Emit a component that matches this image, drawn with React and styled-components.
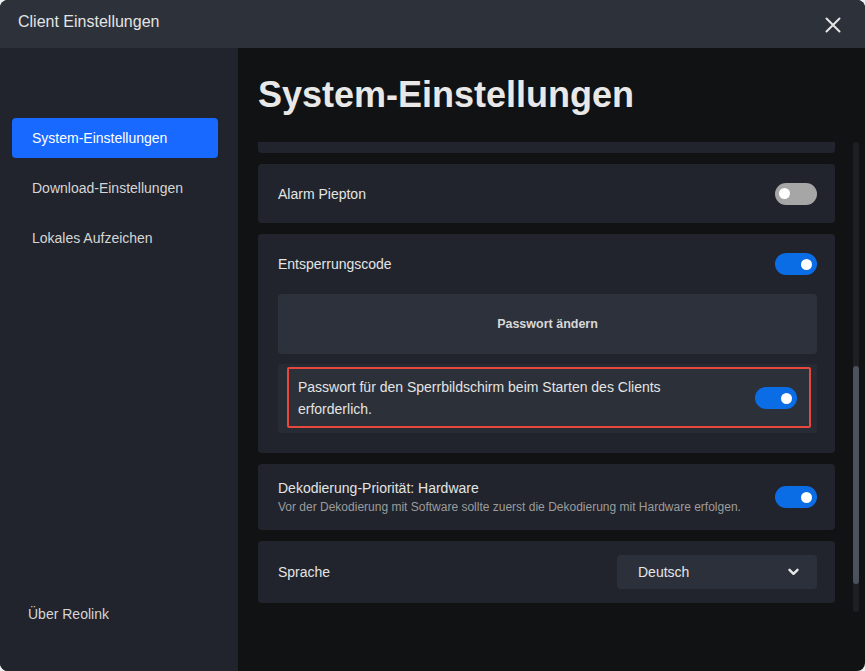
import React, { useState } from 'react'
import styled, { createGlobalStyle } from 'styled-components'

const GlobalStyle = createGlobalStyle`
  html, body {
    margin: 0;
    padding: 0;
    background: #eef0f2;
  }
  body {
    font-family: "Liberation Sans", Arial, sans-serif;
  }
  * {
    box-sizing: border-box;
  }
`

const Window = styled.div`
  width: 865px;
  height: 671px;
  display: flex;
  flex-direction: column;
  border-radius: 8px;
  overflow: hidden;
  background: #111213;
`

const TitleBar = styled.div`
  height: 48px;
  flex: none;
  display: flex;
  align-items: center;
  justify-content: space-between;
  padding: 0 24px 4px 18px;
  background: #2c313a;
  color: #e4e4e4;
  font-size: 16px;
`

const CloseButton = styled.button`
  width: 16px;
  height: 16px;
  padding: 0;
  border: 0;
  background: none;
  display: flex;
  cursor: pointer;
  margin-top: 6px;
`

const Body = styled.div`
  flex: 1;
  display: flex;
  min-height: 0;
`

const Sidebar = styled.nav`
  width: 238px;
  flex: none;
  display: flex;
  flex-direction: column;
  gap: 10px;
  padding: 70px 20px 37px 12px;
  background: #21242c;
`

const NavItem = styled.div`
  height: 40px;
  display: flex;
  align-items: center;
  padding-left: ${p => (p.$footer ? '16px' : '20px')};
  margin-top: ${p => (p.$footer ? 'auto' : '0')};
  border-radius: 4px;
  font-size: 14px;
  color: ${p => (p.$active ? '#ffffff' : '#d6d6d6')};
  background: ${p => (p.$active ? '#1769ff' : 'transparent')};
  cursor: pointer;
`

const Main = styled.main`
  flex: 1;
  display: flex;
  flex-direction: column;
  padding: 25px 6px 59px 20px;
  min-width: 0;
`

const Heading = styled.h1`
  margin: 0 0 25px;
  font-size: 36px;
  line-height: 44px;
  font-weight: 700;
  color: #e8e8e8;
`

const ScrollArea = styled.div`
  flex: 1;
  display: flex;
  gap: 18px;
  min-height: 0;
`

const Viewport = styled.div`
  flex: 1;
  overflow: hidden;
  display: flex;
  flex-direction: column;
  gap: 11px;
`

const ScrollTrack = styled.div`
  width: 6px;
  flex: none;
  border-radius: 3px;
  background: #1d1f23;
`

const ScrollThumb = styled.div`
  width: 6px;
  border-radius: 3px;
  background: #4a525d;
`

const Card = styled.section`
  flex: none;
  display: flex;
  flex-direction: column;
  padding: ${p => p.$pad || '0 18px 0 20px'};
  border-radius: 4px;
  background: #21242d;
`

const ClippedCard = styled(Card)`
  height: 60px;
  margin-top: -49px;
`

const Row = styled.div`
  display: flex;
  align-items: center;
  justify-content: space-between;
  gap: 16px;
  min-height: ${p => p.$h || 60}px;
`

const Label = styled.div`
  font-size: 14px;
  line-height: 20px;
  color: #e4e4e4;
`

const Hint = styled.div`
  font-size: 12px;
  line-height: 18px;
  color: #9c9c9c;
`

const Wide = styled.button`
  height: 60px;
  border: 0;
  border-radius: 4px;
  background: #2c313b;
  color: #d8d8d8;
  font-family: inherit;
  font-size: 12.5px;
  font-weight: 700;
  cursor: pointer;
`

const SubRow = styled.div`
  margin-top: 10px;
  padding: 3px 6px 5px 9px;
  border-radius: 2px;
  background: #272b33;
`

const Highlight = styled.div`
  display: flex;
  align-items: center;
  justify-content: space-between;
  gap: 40px;
  padding: 7px 12px 6px 9px;
  border: 2px solid #e8473d;
  border-radius: 2px;
  background: #2b3039;
`

const LongLabel = styled(Label)`
  line-height: 22px;
  max-width: 400px;
`

const Track = styled.div`
  width: 42px;
  height: 22px;
  flex: none;
  display: flex;
  align-items: center;
  justify-content: ${p => (p.$on ? 'flex-end' : 'flex-start')};
  padding: 0 5px 0 4px;
  border-radius: 11px;
  background: ${p => (p.$on ? '#0b6de6' : '#a6a6a6')};
  cursor: pointer;
`

const Knob = styled.span`
  width: 11px;
  height: 11px;
  border-radius: 50%;
  background: #ffffff;
`

const Select = styled.div`
  width: 200px;
  height: 34px;
  display: flex;
  align-items: center;
  justify-content: space-between;
  padding: 0 18px 0 21px;
  border-radius: 4px;
  background: #2b303a;
  color: #e6e6e6;
  font-size: 14px;
  cursor: pointer;
`

function Toggle({ on, onChange }) {
  return (
    <Track $on={on} onClick={() => onChange(!on)}>
      <Knob />
    </Track>
  )
}

export default function App() {
  const [beep, setBeep] = useState(false)
  const [lockCode, setLockCode] = useState(true)
  const [lockOnStart, setLockOnStart] = useState(true)
  const [hwDecode, setHwDecode] = useState(true)

  return (
    <>
      <GlobalStyle />
      <Window>
        <TitleBar>
          <span>Client Einstellungen</span>
          <CloseButton aria-label="Schließen">
            <svg width="16" height="16" viewBox="0 0 16 16">
              <path d="M1.5 1.5 L14.5 14.5 M14.5 1.5 L1.5 14.5" stroke="#e6e6e6" strokeWidth="2" strokeLinecap="round" />
            </svg>
          </CloseButton>
        </TitleBar>
        <Body>
          <Sidebar>
            <NavItem $active>System-Einstellungen</NavItem>
            <NavItem>Download-Einstellungen</NavItem>
            <NavItem>Lokales Aufzeichen</NavItem>
            <NavItem $footer>Über Reolink</NavItem>
          </Sidebar>
          <Main>
            <Heading>System-Einstellungen</Heading>
            <ScrollArea>
              <Viewport>
                <ClippedCard />
                <Card>
                  <Row $h={59}>
                    <Label>Alarm Piepton</Label>
                    <Toggle on={beep} onChange={setBeep} />
                  </Row>
                </Card>
                <Card $pad="0 18px 20px 20px">
                  <Row>
                    <Label>Entsperrungscode</Label>
                    <Toggle on={lockCode} onChange={setLockCode} />
                  </Row>
                  <Wide>Passwort ändern</Wide>
                  <SubRow>
                    <Highlight>
                      <LongLabel>Passwort für den Sperrbildschirm beim Starten des Clients erforderlich.</LongLabel>
                      <Toggle on={lockOnStart} onChange={setLockOnStart} />
                    </Highlight>
                  </SubRow>
                </Card>
                <Card $pad="14px 18px 14px 20px">
                  <Row $h={38}>
                    <div>
                      <Label>Dekodierung-Priorität: Hardware</Label>
                      <Hint>Vor der Dekodierung mit Software sollte zuerst die Dekodierung mit Hardware erfolgen.</Hint>
                    </div>
                    <Toggle on={hwDecode} onChange={setHwDecode} />
                  </Row>
                </Card>
                <Card $pad="14px 18px 14px 20px">
                  <Row $h={34}>
                    <Label>Sprache</Label>
                    <Select>
                      <span>Deutsch</span>
                      <svg width="11" height="8" viewBox="0 0 11 8">
                        <path d="M1.5 1.8 L5.5 5.8 L9.5 1.8" fill="none" stroke="#e6e6e6" strokeWidth="2.4" strokeLinecap="round" strokeLinejoin="round" />
                      </svg>
                    </Select>
                  </Row>
                </Card>
              </Viewport>
              <ScrollTrack>
                <ScrollThumb style={{ marginTop: 224, height: 218 }} />
              </ScrollTrack>
            </ScrollArea>
          </Main>
        </Body>
      </Window>
    </>
  )
}
